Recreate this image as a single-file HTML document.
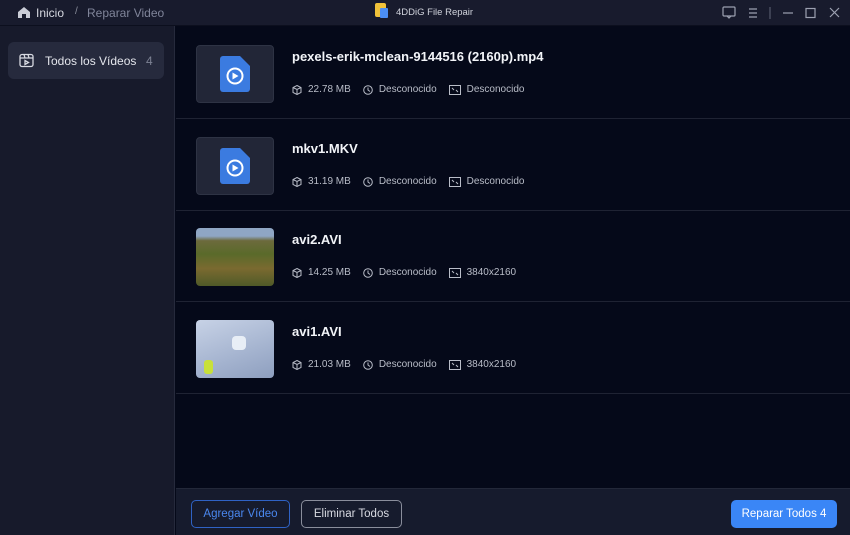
<!DOCTYPE html>
<html><head><meta charset="utf-8"><style>
*{margin:0;padding:0;box-sizing:border-box}
body{width:850px;height:535px;overflow:hidden;background:#050919;font-family:"Liberation Sans",sans-serif;position:relative;color:#fff}
.top{position:absolute;left:0;top:0;width:850px;height:26px;background:#181b2d;border-bottom:1px solid #0c0f1e}
.side{position:absolute;left:0;top:26px;width:175px;height:509px;background:#171a2b;border-right:1px solid #262a3c}
.item{position:absolute;left:8px;top:42px;width:156px;height:37px;background:#262a3d;border-radius:6px}
.row{position:absolute;left:176px;width:674px;height:92px;border-bottom:1px solid #1f2333}
.thumb{position:absolute;left:20px;top:18px;width:78px;height:58px;border-radius:4px;background:#222637;border:1px solid #2e3344;overflow:hidden}
.name{position:absolute;left:116px;top:22px;font-size:13px;font-weight:bold;color:#f2f4f8}
.meta{position:absolute;left:116px;top:57px;font-size:10px;color:#b9bdc8;display:flex;align-items:center}
.meta svg{margin-right:6px}
.meta span{margin-right:12px}
.foot{position:absolute;left:176px;top:488px;width:674px;height:47px;background:#161b2d;border-top:1px solid #232839}
.btn{position:absolute;top:11px;height:28px;border-radius:5px;font-size:11.5px;display:flex;align-items:center;justify-content:center}
</style></head><body>
<div class="top">
 <svg style="position:absolute;left:18px;top:7px" width="12" height="11" viewBox="0 0 12 11"><path d="M6 0L0 5v6h4V7h4v4h4V5z" fill="#c9ccd6"/></svg>
 <div style="position:absolute;left:36px;top:6px;font-size:12px;color:#d6d8e0">Inicio</div>
 <div style="position:absolute;left:75px;top:6px;font-size:10px;color:#8a8e9c">/</div>
 <div style="position:absolute;left:87px;top:6px;font-size:12px;color:#80859a">Reparar Video</div>
 <div style="position:absolute;left:375px;top:3px;width:11px;height:14px;background:#f0c23a;border-radius:2px"></div>
 <div style="position:absolute;left:380px;top:8px;width:8px;height:10px;background:#4b8ef5;border-radius:1px"></div>
 <div style="position:absolute;left:396px;top:7px;font-size:9.5px;color:#d0d3dc">4DDiG File Repair</div>
 <svg style="position:absolute;left:722px;top:6px" width="120" height="14" viewBox="0 0 120 14" fill="none" stroke="#9ca1b1" stroke-width="1.2"><rect x="1" y="1" width="12" height="9" rx="1"/><path d="M5 10l2 2 2-2"/><path d="M27 3h8M27 7h8M27 11h8"/><path d="M48 1v12" stroke="#555a6c"/><path d="M61 7h10"/><rect x="84" y="2.5" width="9" height="9"/><path d="M108 2l9 9M117 2l-9 9"/></svg>
</div>
<div class="side">
</div>
<div class="item">
 <svg style="position:absolute;left:11px;top:11px" width="15" height="15" viewBox="0 0 15 15" fill="none" stroke="#d8dae2" stroke-width="1.3"><rect x="1" y="1.5" width="13" height="12" rx="2"/><path d="M1 5h13M5 1.5l1 3.5M9 1.5l1 3.5"/><path d="M6 7.5v4l3.5-2z"/></svg>
 <div style="position:absolute;left:37px;top:12px;font-size:12px;color:#e4e6ec">Todos los Vídeos</div>
 <div style="position:absolute;left:138px;top:12px;font-size:12px;color:#7d8294">4</div>
</div>

<div class="row" style="top:27px">
 <div class="thumb"><svg style="position:absolute;left:23px;top:10px" width="30" height="36" viewBox="0 0 30 36"><path d="M3 0h17l10 10v23a3 3 0 0 1-3 3H3a3 3 0 0 1-3-3V3a3 3 0 0 1 3-3z" fill="#3b7be0"/><circle cx="15" cy="20" r="7.5" fill="none" stroke="#fff" stroke-width="2"/><path d="M12.5 16.5v7l6-3.5z" fill="#fff"/></svg></div>
 <div class="name">pexels-erik-mclean-9144516 (2160p).mp4</div>
 <div class="meta"><svg width="10" height="10" viewBox="0 0 10 10" fill="none" stroke="#b9bdc8"><path d="M5 .5l4 2v5l-4 2-4-2v-5zM1 2.5l4 2 4-2M5 4.5v5"/></svg><span>22.78 MB</span><svg width="10" height="10" viewBox="0 0 10 10" fill="none" stroke="#b9bdc8"><circle cx="5" cy="5" r="4.3"/><path d="M5 2.5V5l2 1.5"/></svg><span>Desconocido</span><svg width="12" height="10" viewBox="0 0 12 10" fill="none" stroke="#b9bdc8"><rect x=".5" y=".5" width="11" height="9"/><path d="M3 3l2 2M9 7L7 5"/></svg><span>Desconocido</span></div>
</div>
<div class="row" style="top:119px">
 <div class="thumb"><svg style="position:absolute;left:23px;top:10px" width="30" height="36" viewBox="0 0 30 36"><path d="M3 0h17l10 10v23a3 3 0 0 1-3 3H3a3 3 0 0 1-3-3V3a3 3 0 0 1 3-3z" fill="#3b7be0"/><circle cx="15" cy="20" r="7.5" fill="none" stroke="#fff" stroke-width="2"/><path d="M12.5 16.5v7l6-3.5z" fill="#fff"/></svg></div>
 <div class="name">mkv1.MKV</div>
 <div class="meta"><svg width="10" height="10" viewBox="0 0 10 10" fill="none" stroke="#b9bdc8"><path d="M5 .5l4 2v5l-4 2-4-2v-5zM1 2.5l4 2 4-2M5 4.5v5"/></svg><span>31.19 MB</span><svg width="10" height="10" viewBox="0 0 10 10" fill="none" stroke="#b9bdc8"><circle cx="5" cy="5" r="4.3"/><path d="M5 2.5V5l2 1.5"/></svg><span>Desconocido</span><svg width="12" height="10" viewBox="0 0 12 10" fill="none" stroke="#b9bdc8"><rect x=".5" y=".5" width="11" height="9"/><path d="M3 3l2 2M9 7L7 5"/></svg><span>Desconocido</span></div>
</div>
<div class="row" style="top:210px">
 <div class="thumb" style="background:linear-gradient(180deg,#8fa6c4 0%,#8fa6c4 14%,#6c6a3c 22%,#5a6a2a 45%,#7a6a30 70%,#4f5a28 100%);border:none"></div>
 <div class="name">avi2.AVI</div>
 <div class="meta"><svg width="10" height="10" viewBox="0 0 10 10" fill="none" stroke="#b9bdc8"><path d="M5 .5l4 2v5l-4 2-4-2v-5zM1 2.5l4 2 4-2M5 4.5v5"/></svg><span>14.25 MB</span><svg width="10" height="10" viewBox="0 0 10 10" fill="none" stroke="#b9bdc8"><circle cx="5" cy="5" r="4.3"/><path d="M5 2.5V5l2 1.5"/></svg><span>Desconocido</span><svg width="12" height="10" viewBox="0 0 12 10" fill="none" stroke="#b9bdc8"><rect x=".5" y=".5" width="11" height="9"/><path d="M3 3l2 2M9 7L7 5"/></svg><span>3840x2160</span></div>
</div>
<div class="row" style="top:302px">
 <div class="thumb" style="background:linear-gradient(160deg,#c7d2e6,#a4b3cf 60%,#8e9fbf);border:none"><div style="position:absolute;left:8px;top:40px;width:9px;height:14px;background:#c8e03a;border-radius:3px"></div><div style="position:absolute;left:36px;top:16px;width:14px;height:14px;background:#e8eef6;border-radius:4px"></div></div>
 <div class="name">avi1.AVI</div>
 <div class="meta"><svg width="10" height="10" viewBox="0 0 10 10" fill="none" stroke="#b9bdc8"><path d="M5 .5l4 2v5l-4 2-4-2v-5zM1 2.5l4 2 4-2M5 4.5v5"/></svg><span>21.03 MB</span><svg width="10" height="10" viewBox="0 0 10 10" fill="none" stroke="#b9bdc8"><circle cx="5" cy="5" r="4.3"/><path d="M5 2.5V5l2 1.5"/></svg><span>Desconocido</span><svg width="12" height="10" viewBox="0 0 12 10" fill="none" stroke="#b9bdc8"><rect x=".5" y=".5" width="11" height="9"/><path d="M3 3l2 2M9 7L7 5"/></svg><span>3840x2160</span></div>
</div>

<div class="foot">
 <div class="btn" style="left:15px;width:99px;border:1px solid #2f62c4;color:#4a87ee">Agregar Vídeo</div>
 <div class="btn" style="left:125px;width:101px;border:1px solid #8a8e9c;color:#d8dae2">Eliminar Todos</div>
 <div class="btn" style="left:555px;width:106px;background:#3a86f6;color:#fff">Reparar Todos 4</div>
</div>
</body></html>
